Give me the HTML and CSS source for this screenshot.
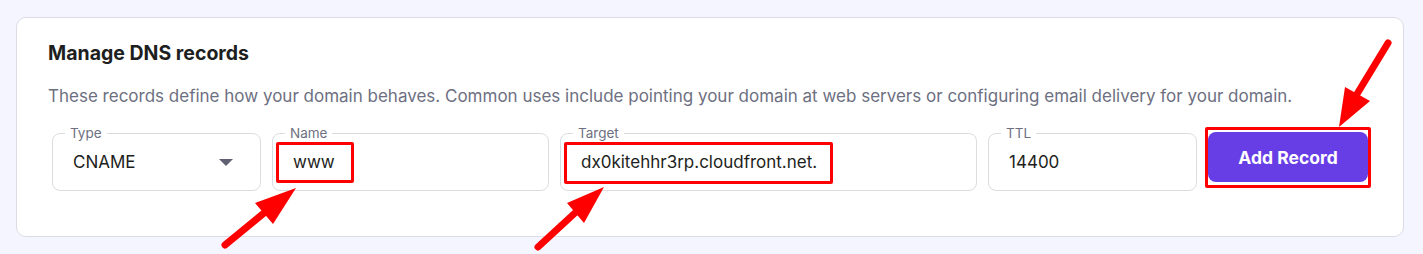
FILE: index.html
```html
<!DOCTYPE html>
<html>
<head>
    <title>Manage DNS records</title>
    <link rel="stylesheet" href="styles.css">
</head>
<body>
    <div class="card">
        <h2>Manage DNS records</h2>
        <p class="intro">These records define how your domain behaves. Common uses include pointing your domain at web servers or configuring email delivery for your domain.</p>

        <div class="record-row">
            <div class="field field-type">
                <span class="field-label">Type</span>
                <span class="field-value">CNAME</span>
                <span class="caret"></span>
            </div>
            <div class="field field-name">
                <span class="field-label">Name</span>
                <span class="field-value">www</span>
                <span class="mark mark-name"></span>
            </div>
            <div class="field field-target">
                <span class="field-label">Target</span>
                <span class="field-value">dx0kitehhr3rp.cloudfront.net.</span>
                <span class="mark mark-target"></span>
            </div>
            <div class="field field-ttl">
                <span class="field-label">TTL</span>
                <span class="field-value">14400</span>
            </div>
            <div class="btn-wrap">
                <button type="button" class="btn-add">Add Record</button>
                <span class="mark mark-btn"></span>
            </div>
        </div>
    </div>

    <!-- annotation arrows -->
    <svg class="arrows" width="1423" height="254" viewBox="0 0 1423 254">
        <g stroke="#ff0000" stroke-width="7" stroke-linecap="round" fill="#ff0000">
            <line x1="225" y1="245" x2="264" y2="213" />
            <line x1="538" y1="247" x2="576" y2="212" />
            <line x1="1388" y1="43" x2="1357" y2="94" />
        </g>
        <g fill="#ff0000">
            <polygon points="296,188 255,203 273,224" />
            <polygon points="604,187 567,203 584,223" />
            <polygon points="1339,127 1345,87 1370,101" />
        </g>
    </svg>
</body>
</html>
```

FILE: styles.css
```css
* {
    box-sizing: border-box;
    margin: 0;
    padding: 0;
}

body {
    position: relative;
    font-family: Inter, 'Noto Sans', Arial, sans-serif;
    background-color: #f4f5ff;
    color: #1d1e20;
    padding: 17px 19px 17px 16px;
    height: 254px;
}

.card {
    background: white;
    border: 1px solid #dcdce6;
    border-radius: 10px;
    padding: 23px 31px 45px 31px;
}

h2 {
    font-size: 19.5px;
    font-weight: 700;
    line-height: 24px;
    color: #1d1e20;
}

.intro {
    margin-top: 19px;
    font-size: 17px;
    line-height: 24px;
    color: #6d7081;
}

.record-row {
    display: flex;
    align-items: flex-start;
    gap: 11px;
    margin-top: 24px;
    padding-left: 4px;
}

.field {
    position: relative;
    height: 58px;
    margin-top: 1px;
    border: 1px solid #dadce0;
    border-radius: 8px;
    display: flex;
    align-items: center;
    padding: 0 20px;
}

.field-type { width: 209px; }
.field-name { width: 277px; }
.field-target { width: 417px; }
.field-ttl { width: 209px; }

.field-label {
    position: absolute;
    top: -10px;
    left: 12px;
    padding: 0 5px;
    background: white;
    font-size: 13.5px;
    line-height: 18px;
    color: #6d7081;
}

.field-value {
    font-size: 17px;
    color: #1d1e20;
    flex: 1;
}

.caret {
    width: 0;
    height: 0;
    border-left: 7px solid transparent;
    border-right: 7px solid transparent;
    border-top: 7px solid #5f6173;
    margin-right: 7px;
}

.btn-wrap {
    position: relative;
}

.btn-add {
    width: 160px;
    height: 50px;
    border: none;
    border-radius: 8px;
    background: #673de6;
    color: white;
    font-family: Inter, 'Noto Sans', Arial, sans-serif;
    font-size: 17.5px;
    font-weight: 700;
    cursor: pointer;
}

/* red annotation boxes */
.mark {
    position: absolute;
    border: 3px solid #ff0000;
    border-radius: 2px;
    pointer-events: none;
}

.mark-name {
    left: 3px;
    top: 8px;
    width: 78px;
    height: 41px;
}

.mark-target {
    left: 3px;
    top: 8px;
    width: 269px;
    height: 42px;
}

.mark-btn {
    left: -3px;
    top: -5px;
    width: 166px;
    height: 61px;
}

.arrows {
    position: absolute;
    top: 0;
    left: 0;
    pointer-events: none;
}
```
